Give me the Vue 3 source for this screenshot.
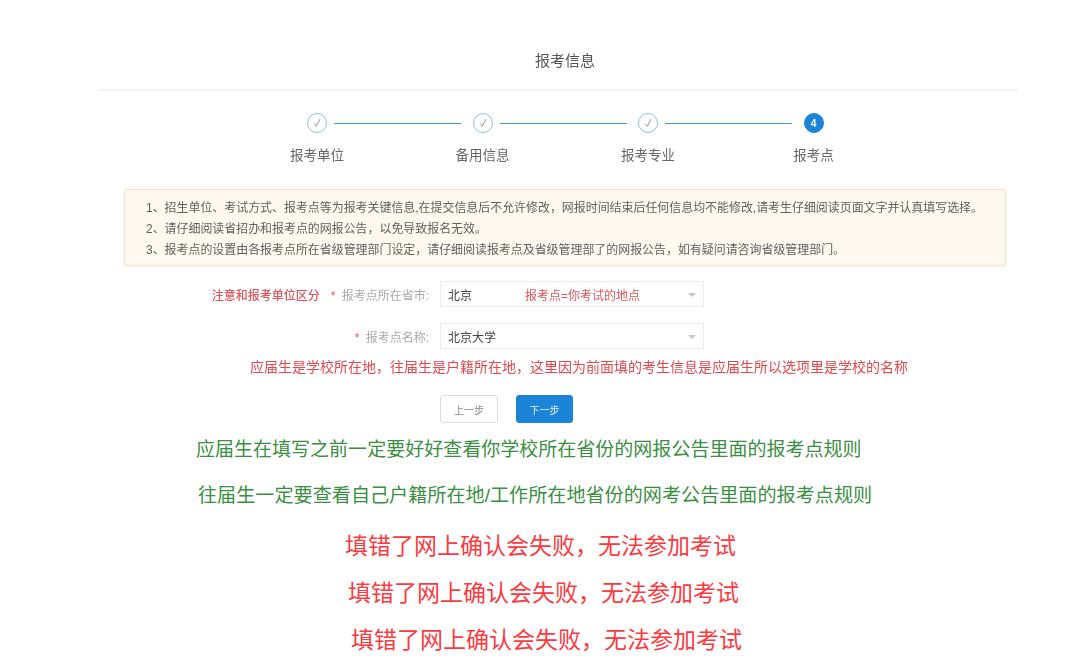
<script setup>
const steps = [
  { label: '报考单位', done: true },
  { label: '备用信息', done: true },
  { label: '报考专业', done: true },
  { label: '报考点', done: false },
]
const notes = [
  '1、招生单位、考试方式、报考点等为报考关键信息,在提交信息后不允许修改，网报时间结束后任何信息均不能修改,请考生仔细阅读页面文字并认真填写选择。',
  '2、请仔细阅读省招办和报考点的网报公告，以免导致报名无效。',
  '3、报考点的设置由各报考点所在省级管理部门设定，请仔细阅读报考点及省级管理部了的网报公告，如有疑问请咨询省级管理部门。',
]
</script>

<template>
  <div class="page">
    <div class="shot">
      <div class="panel">
        <div class="title">报考信息</div>
        <div class="steps">
          <div v-for="(s, i) in steps" :key="s.label" class="step">
            <div class="track">
              <div v-if="s.done" class="dot">
                <svg width="12" height="12" viewBox="0 0 12 12"><path d="M3.2 6.6 L5.3 9.4 L8.9 2.2" fill="none" stroke="#8a9aa6" stroke-width="1"/></svg>
              </div>
              <div v-else class="dot active">4</div>
              <div v-if="i < 3" class="line"></div>
            </div>
            <div class="step-label">{{ s.label }}</div>
          </div>
        </div>
      </div>

      <div class="alert">
        <p v-for="n in notes" :key="n">{{ n }}</p>
      </div>

      <div class="row first">
        <div class="label">
          <span class="note">注意和报考单位区分</span>
          <span class="star">*</span> 报考点所在省市:
        </div>
        <div class="select">
          <span class="value">北京</span>
          <span class="hint">报考点=你考试的地点</span>
          <i class="caret"></i>
        </div>
      </div>
      <div class="row second">
        <div class="label"><span class="star">*</span> 报考点名称:</div>
        <div class="select">
          <span class="value">北京大学</span>
          <i class="caret"></i>
        </div>
      </div>

      <div class="red-note">应届生是学校所在地，往届生是户籍所在地，这里因为前面填的考生信息是应届生所以选项里是学校的名称</div>

      <div class="buttons">
        <button class="btn">上一步</button>
        <button class="btn primary">下一步</button>
      </div>
    </div>

    <div class="green g1">应届生在填写之前一定要好好查看你学校所在省份的网报公告里面的报考点规则</div>
    <div class="green g2">往届生一定要查看自己户籍所在地/工作所在地省份的网考公告里面的报考点规则</div>

    <div class="warn w1">填错了网上确认会失败，无法参加考试</div>
    <div class="warn w2">填错了网上确认会失败，无法参加考试</div>
    <div class="warn w3">填错了网上确认会失败，无法参加考试</div>
  </div>
</template>

<style>
html, body { margin: 0; background: #fff; }
</style>

<style scoped>
.page {
  width: 1080px;
  height: 671px;
  overflow: hidden;
  background: #fff;
  font-family: "Liberation Sans", "Noto Sans CJK SC", sans-serif;
  color: #555;
}
.shot { filter: blur(0.35px); }
.panel {
  margin-left: 100px;
  width: 918px;
}
.title {
  height: 91px;
  box-sizing: border-box;
  padding: 51px 0 0 12px;
  text-align: center;
  font-size: 15px;
  line-height: 20px;
  color: #555;
  border-bottom: 2px solid #f2f2f2;
}
.steps {
  display: flex;
  padding-left: 190px;
  padding-top: 21px;
}
.step { width: 165.5px; flex: none; }
.track { display: flex; align-items: center; height: 22px; padding-left: 17px; }
.dot {
  width: 20px;
  height: 20px;
  box-sizing: border-box;
  border: 1px solid #86bfe2;
  border-radius: 50%;
  display: flex;
  align-items: center;
  justify-content: center;
  flex: none;
}
.dot.active {
  background: #1c84d8;
  border-color: #1c84d8;
  color: #fff;
  font-size: 10px;
  font-weight: 700;
}
.line {
  height: 1px;
  width: 127px;
  flex: none;
  margin-left: 7px;
  background: #3f9ad4;
}
.step-label {
  margin-top: 13px;
  width: 54px;
  text-align: center;
  white-space: nowrap;
  font-size: 13.5px;
  line-height: 18px;
  color: #666;
}
.alert {
  margin: 24px 0 0 124px;
  width: 882px;
  height: 77px;
  box-sizing: border-box;
  padding: 8px 0 0 21px;
  background: #fdf9ee;
  border: 1px solid #eee4c8;
  border-radius: 3px;
  box-shadow: 0 0 2px #e9e3d0;
}
.alert p {
  margin: 0;
  font-size: 11.95px;
  line-height: 21px;
  color: #5f5f5f;
  white-space: nowrap;
}
.row { display: flex; align-items: center; }
.row.first { margin-top: 15px; }
.row.second { margin-top: 16px; }
.label {
  width: 429px;
  flex: none;
  text-align: right;
  font-size: 12px;
  color: #aaa;
  white-space: nowrap;
}
.note { color: #e0555a; margin-right: 11px; font-size: 12px; font-weight: 500; }
.star { color: #e0555a; margin-right: 3px; }
.select {
  margin-left: 11px;
  width: 264px;
  height: 26px;
  box-sizing: border-box;
  border: 1px solid #ececec;
  display: flex;
  align-items: center;
  padding-left: 7px;
  position: relative;
  font-size: 12px;
  color: #444;
}
.hint { color: #e0555a; font-size: 12px; margin-left: 53px; }
.caret {
  position: absolute;
  right: 7px;
  top: 11px;
  border-left: 4px solid transparent;
  border-right: 4px solid transparent;
  border-top: 4px solid #c4c4c4;
}
.red-note {
  margin: 8px 0 0 250px;
  font-size: 14px;
  line-height: 20px;
  color: #e5484d;
  white-space: nowrap;
}
.buttons { display: flex; gap: 18px; margin: 18px 0 0 440px; }
.btn {
  width: 58px;
  height: 28px;
  padding: 0;
  box-sizing: border-box;
  border: 1px solid #ddd;
  border-radius: 3px;
  background: #fff;
  color: #888;
  font-family: inherit;
  font-size: 10px;
}
.btn.primary {
  width: 57px;
  background: #1c84d8;
  border-color: #1c84d8;
  color: #e8f3fb;
}
.green {
  color: #3a8f42;
  white-space: nowrap;
  line-height: 24px;
}
.g1 { margin: 15px 0 0 196px; font-size: 19.03px; }
.g2 { margin: 22px 0 0 198px; font-size: 19.12px; }
.warn {
  color: #fb3a3f;
  font-size: 23px;
  line-height: 32px;
  white-space: nowrap;
}
.w1 { margin: 22px 0 0 345px; }
.w2 { margin: 15px 0 0 348px; }
.w3 { margin: 15px 0 0 351px; }
</style>
